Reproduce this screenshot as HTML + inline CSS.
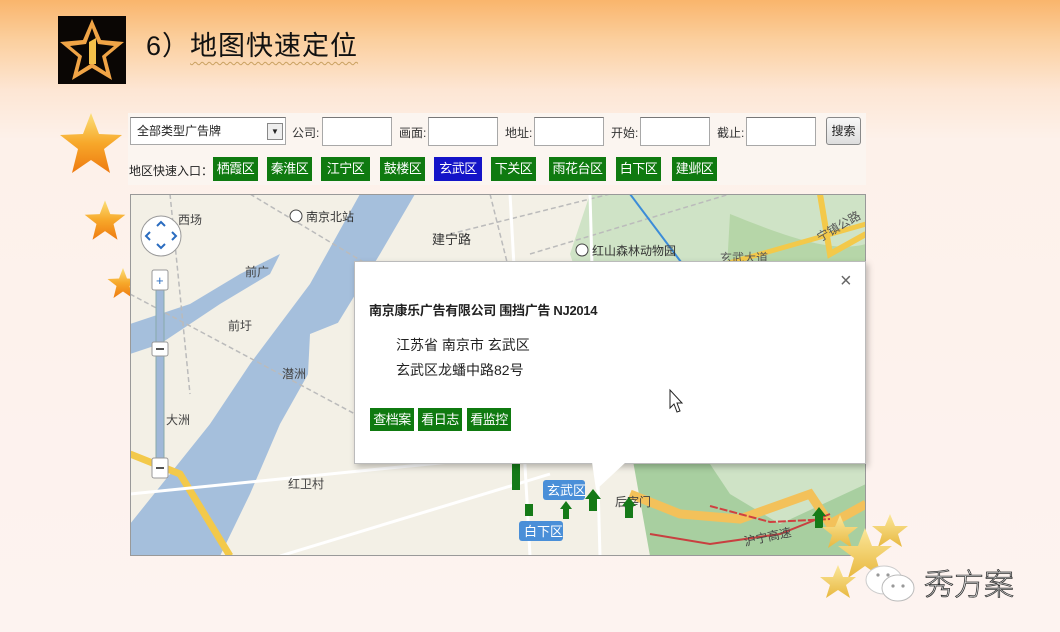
<!DOCTYPE html>
<html><head><meta charset="utf-8">
<style>
*{margin:0;padding:0;box-sizing:border-box}
body{width:1060px;height:632px;overflow:hidden;position:relative;font-family:"Liberation Sans","Noto Sans CJK SC",sans-serif;
background:linear-gradient(180deg,#f9b56c 0px,#fbcf9e 40px,#fde6d4 90px,#fdf1ea 140px,#fdf3f0 632px);}
.abs{position:absolute}
.title{left:146px;top:24px;font-size:27px;color:#111;letter-spacing:1px}
.title span{text-decoration:underline wavy #c9a060 1px;text-underline-offset:6px}
.bar{left:128px;top:113px;width:738px;height:72px;background:#fbf5f0}
.lbl{font-size:12px;color:#333;top:124px}
.inp{height:29px;top:117px;background:#fff;border:1px solid #a8a8a8;border-top-color:#777}
.g{position:absolute;top:157px;height:24px;background:#0f7a10;color:#fff;font-size:13px;line-height:24px;text-align:center;letter-spacing:-0.5px}
.btn{position:absolute;height:23px;background:#0f7a10;color:#fff;font-size:13px;line-height:23px;text-align:center;letter-spacing:-0.5px}
</style></head><body>

<svg class="abs" style="left:58px;top:16px" width="68" height="68" viewBox="0 0 68 68">
<rect width="68" height="68" fill="#0a0604"/>
<polygon points="34,3 43,24 66,26 48,41 54,64 34,52 14,64 20,41 2,26 25,24" fill="#f0a446"/>
<polygon points="34,12 40,28 56,30 44,40 48,56 34,47 20,56 24,40 12,30 28,28" fill="#0a0604"/>
<polygon points="31,26 38,22 38,48 31,48" fill="#f4c04a"/>
</svg>
<div class="abs title">6）<span>地图快速定位</span></div>

<svg class="abs" style="left:58px;top:111px" width="66" height="64" viewBox="0 0 66 64"><defs><linearGradient id="sg" x1="0" y1="0" x2="0" y2="1"><stop offset="0" stop-color="#fbe07a"/><stop offset=".5" stop-color="#f7a82a"/><stop offset="1" stop-color="#ee7a10"/></linearGradient></defs>
<polygon points="33,2 41,23 64,24 46,38 52,62 33,49 14,62 20,38 2,24 25,23" fill="url(#sg)"/></svg>
<svg class="abs" style="left:82px;top:199px" width="46" height="42" viewBox="0 0 66 64"><polygon points="33,2 41,23 64,24 46,38 52,62 33,49 14,62 20,38 2,24 25,23" fill="url(#sg)"/></svg>
<svg class="abs" style="left:106px;top:267px" width="34" height="32" viewBox="0 0 66 64"><polygon points="33,2 41,23 64,24 46,38 52,62 33,49 14,62 20,38 2,24 25,23" fill="url(#sg)"/></svg>

<div class="abs bar"></div>
<div class="abs inp" style="left:130px;width:156px;height:28px;font-size:12px;line-height:26px;padding-left:6px;color:#222">全部类型广告牌
 <div style="position:absolute;right:2px;top:5px;width:16px;height:17px;border:1px solid #888;background:#eee;font-size:8px;line-height:15px;text-align:center">▼</div></div>
<div class="abs lbl" style="left:292px">公司:</div><div class="abs inp" style="left:322px;width:70px"></div>
<div class="abs lbl" style="left:399px">画面:</div><div class="abs inp" style="left:428px;width:70px"></div>
<div class="abs lbl" style="left:505px">地址:</div><div class="abs inp" style="left:534px;width:70px"></div>
<div class="abs lbl" style="left:611px">开始:</div><div class="abs inp" style="left:640px;width:70px"></div>
<div class="abs lbl" style="left:717px">截止:</div><div class="abs inp" style="left:746px;width:70px"></div>
<div class="abs" style="left:826px;top:117px;width:35px;height:28px;border:1px solid #888;border-radius:3px;background:linear-gradient(#f8f8f8,#ddd);font-size:12px;line-height:26px;text-align:center;color:#222">搜索</div>
<div class="abs" style="left:129px;top:162px;font-size:12px;color:#222">地区快速入口：</div>
<div class="g" style="left:213px;width:45px">栖霞区</div>
<div class="g" style="left:267px;width:45px">秦淮区</div>
<div class="g" style="left:321px;width:49px">江宁区</div>
<div class="g" style="left:380px;width:45px">鼓楼区</div>
<div class="g" style="left:434px;width:48px;background:#1414c8">玄武区</div>
<div class="g" style="left:491px;width:45px">下关区</div>
<div class="g" style="left:549px;width:57px">雨花台区</div>
<div class="g" style="left:616px;width:45px">白下区</div>
<div class="g" style="left:672px;width:45px">建邺区</div>

<svg class="abs" style="left:130px;top:194px" width="736" height="362" viewBox="0 0 736 362" font-family="Liberation Sans,Noto Sans CJK SC,sans-serif">
<rect width="736" height="362" fill="#f3f0e6"/>
<path d="M460 0 L736 0 L736 362 L560 362 L520 260 L470 150 L440 60Z" fill="#cfe3c6"/>
<path d="M600 20 C650 40 700 60 736 50 L736 200 L650 260 L590 200Z" fill="#b6d6a8"/>
<path d="M500 250 L560 240 L600 300 L650 330 L736 290 L736 362 L520 362Z" fill="#a8cfa0"/>
<path d="M230 0 L285 0 L250 60 L195 150 L150 230 L120 300 L90 362 L0 362 L0 330 L40 280 L80 230 L120 170 L180 90Z" fill="#a5bfdc"/>
<path d="M0 130 L60 110 L110 80 L150 60 L140 80 L90 110 L30 150 L0 160Z" fill="#a5bfdc"/>
<path d="M180 140 L230 120 L245 170 L220 260 L190 300 L175 240Z" fill="#f3f0e6"/>
<path d="M0 260 L50 280 L100 362" stroke="#f3c94a" stroke-width="7" fill="none"/>
<path d="M500 300 L550 320 L610 325 L680 300 L700 330 L736 310" stroke="#f3c15a" stroke-width="9" fill="none"/>
<path d="M520 340 L580 350 L650 340 L700 320" stroke="#c84040" stroke-width="2" fill="none"/>
<path d="M580 312 L640 328 L700 325" stroke="#d04040" stroke-width="2" fill="none" stroke-dasharray="8 2"/>
<path d="M690 0 L700 60 L736 40" stroke="#f3c94a" stroke-width="6" fill="none"/>
<path d="M560 80 L736 30" stroke="#f3c94a" stroke-width="5" fill="none"/>
<path d="M40 0 L60 200 M120 0 L320 120 M320 40 L480 0 M360 0 L380 80 M400 60 L600 0 M0 100 L300 260 L520 260" stroke="#bbb" stroke-width="1.5" fill="none" stroke-dasharray="5 3"/>
<path d="M0 300 L400 260 M150 362 L420 280 M380 0 L400 362 M460 0 L470 362" stroke="#fff" stroke-width="3" fill="none"/>
<path d="M500 0 L560 80 L600 200" stroke="#3c8cd8" stroke-width="2" fill="none"/>
<text x="48" y="30" font-size="12" fill="#444">西场</text>
<circle cx="166" cy="22" r="6" fill="#fff" stroke="#444"/><text x="176" y="27" font-size="12" fill="#333">南京北站</text>
<text x="302" y="50" font-size="13" fill="#333">建宁路</text>
<circle cx="452" cy="56" r="6" fill="#fff" stroke="#444"/><text x="462" y="61" font-size="12" fill="#333">红山森林动物园</text>
<text x="590" y="68" font-size="12" fill="#555">玄武大道</text>
<text x="690" y="48" font-size="12" fill="#555" transform="rotate(-30 690 48)">宁镇公路</text>
<text x="115" y="82" font-size="12" fill="#444">前广</text>
<text x="98" y="136" font-size="12" fill="#444">前圩</text>
<text x="152" y="184" font-size="12" fill="#444">潜洲</text>
<text x="36" y="230" font-size="12" fill="#444">大洲</text>
<text x="158" y="294" font-size="12" fill="#444">红卫村</text>
<text x="485" y="312" font-size="12" fill="#444">后宰门</text>
<text x="615" y="352" font-size="12" fill="#444" transform="rotate(-12 615 352)">沪宁高速</text>
<rect x="413" y="286" width="42" height="20" rx="3" fill="#4a8fd8"/><text x="417" y="301" font-size="13" fill="#fff">玄武区</text>
<rect x="389" y="327" width="44" height="20" rx="3" fill="#4a8fd8"/><text x="394" y="342" font-size="13" fill="#fff">白下区</text>
<g fill="#157a18"><rect x="382" y="270" width="8" height="26"/><rect x="395" y="310" width="8" height="12"/><path d="M430 315 l6 -8 6 8 -3 0 0 10 -6 0 0 -10z"/><path d="M455 305 l8 -10 8 10 -4 0 0 12 -8 0 0 -12z"/><path d="M492 312 l7 -9 7 9 -3 0 0 12 -8 0 0 -12z"/><path d="M682 322 l7 -9 7 9 -3 0 0 12 -8 0 0 -12z"/></g>
<circle cx="31" cy="42" r="20" fill="#fff" stroke="#999"/>
<path d="M20 38 l-4 4 4 4 M42 38 l4 4 -4 4 M27 50 l4 4 4 -4 M27 32 l4 -4 4 4" stroke="#2a6cc0" stroke-width="2" fill="none"/>
<rect x="26" y="88" width="8" height="190" fill="#a0b8d8" stroke="#8aa"/>
<rect x="22" y="76" width="16" height="20" rx="2" fill="#fff" stroke="#999"/><text x="26" y="91" font-size="13" fill="#2a6cc0">+</text>
<rect x="22" y="148" width="16" height="14" rx="2" fill="#fff" stroke="#999"/><rect x="26" y="154" width="8" height="2" fill="#555"/>
<rect x="22" y="264" width="16" height="20" rx="2" fill="#fff" stroke="#999"/><rect x="26" y="273" width="8" height="2" fill="#555"/>
<rect x="0.5" y="0.5" width="735" height="361" fill="none" stroke="#999"/>
</svg>

<div class="abs" style="left:354px;top:261px;width:512px;height:203px;background:#fff;border:1px solid #bbb;box-shadow:2px 3px 6px rgba(0,0,0,.25)"></div>
<svg class="abs" style="left:592px;top:462px" width="34" height="30"><polygon points="0,0 34,0 4,28" fill="#fff"/></svg>
<div class="abs" style="left:840px;top:270px;font-size:20px;color:#666">×</div>
<div class="abs" style="left:369px;top:300px;font-size:13px;font-weight:bold;color:#222;letter-spacing:-0.3px">南京康乐广告有限公司 围挡广告 NJ2014</div>
<div class="abs" style="left:396px;top:335px;font-size:14px;color:#222">江苏省 南京市 玄武区</div>
<div class="abs" style="left:396px;top:360px;font-size:14px;color:#222">玄武区龙蟠中路82号</div>
<div class="btn" style="left:370px;top:408px;width:44px">查档案</div>
<div class="btn" style="left:418px;top:408px;width:44px">看日志</div>
<div class="btn" style="left:467px;top:408px;width:44px">看监控</div>
<svg class="abs" style="left:668px;top:388px" width="16" height="26"><path d="M2 2 L2 20 L6 16 L9 24 L12 23 L9 15 L14 15Z" fill="#fff" stroke="#222"/></svg>

<svg class="abs" style="left:820px;top:510px" width="100" height="100" viewBox="0 0 100 100">
<defs><linearGradient id="yg" x1="0" y1="0" x2="0" y2="1"><stop offset="0" stop-color="#fbe79a"/><stop offset="1" stop-color="#e8b840"/></linearGradient></defs>
<g fill="url(#yg)">
<polygon points="20,5 25,17 38,17 28,25 32,38 20,30 8,38 12,25 2,17 15,17"/>
<polygon points="70,4 75,16 88,16 78,24 82,37 70,29 58,37 62,24 52,16 65,16"/>
<polygon points="45,18 52,36 72,36 56,48 62,68 45,56 28,68 34,48 18,36 38,36"/>
<polygon points="18,55 23,67 36,67 26,75 30,88 18,80 6,88 10,75 0,67 13,67"/>
</g></svg>
<svg class="abs" style="left:862px;top:562px" width="56" height="44" viewBox="0 0 56 44">
<ellipse cx="22" cy="18" rx="18" ry="14" fill="#fff" stroke="#ccc"/>
<ellipse cx="36" cy="26" rx="16" ry="13" fill="#fff" stroke="#bbb"/>
<circle cx="16" cy="13" r="1.6" fill="#999"/><circle cx="26" cy="13" r="1.6" fill="#999"/>
<circle cx="31" cy="24" r="1.6" fill="#999"/><circle cx="41" cy="24" r="1.6" fill="#999"/>
</svg>
<div class="abs" style="left:924px;top:560px;font-size:30px;font-weight:300;color:#fff;-webkit-text-stroke:0.8px #333;font-family:'Noto Sans CJK SC',sans-serif">秀方案</div>
</body></html>
